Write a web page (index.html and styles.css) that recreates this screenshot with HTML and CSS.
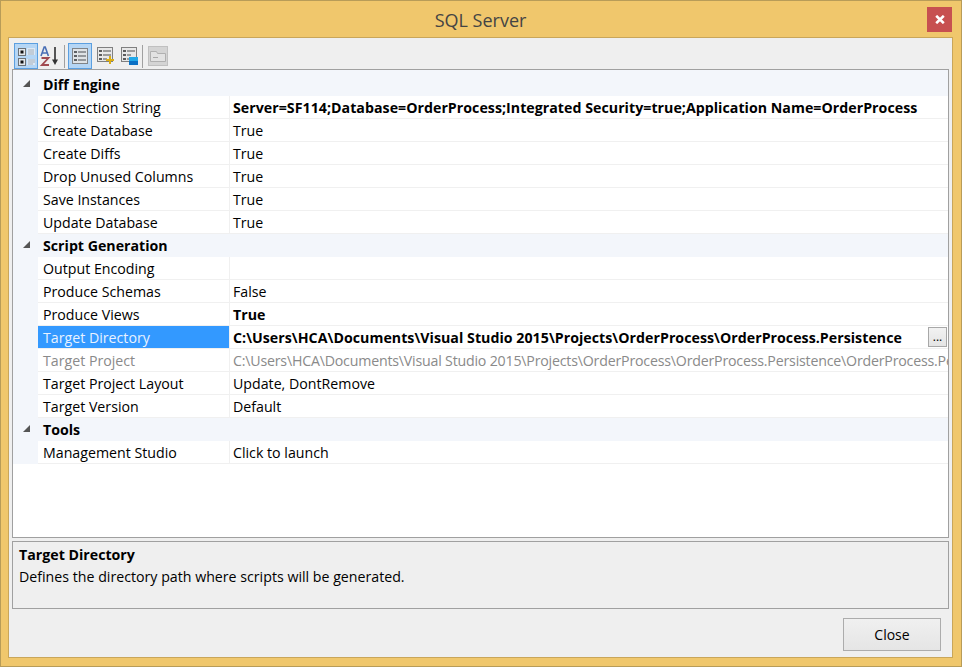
FILE: index.html
```html
<!DOCTYPE html>
<html lang="en">
<head>
  <meta charset="UTF-8" />
  <title>SQL Server</title>
  <link rel="stylesheet" href="styles.css">
</head>
<body>

<div class="window">
  <div class="titlebar">
    <span class="title">SQL Server</span>
    <button class="close-x" aria-label="Close">
      <svg width="10" height="9" viewBox="0 0 10 9"><path d="M1.2 .8 L8.8 8.2 M8.8 .8 L1.2 8.2" stroke="#fff" stroke-width="2.6" fill="none"/></svg>
    </button>
  </div>

  <div class="client">
    <div class="toolbar">
      <button class="tool on">
        <svg width="20" height="20" viewBox="0 0 20 20">
          <rect x="2.5" y="2.5" width="7" height="7" fill="#e4e8ec" stroke="#6c7278"/>
          <rect x="4.5" y="4.5" width="3" height="3" fill="#111"/>
          <rect x="2.5" y="12.5" width="7" height="7" fill="#e4e8ec" stroke="#6c7278"/>
          <rect x="4.5" y="14.5" width="3" height="3" fill="#111"/>
          <path d="M11 2h8v7h-8z M11 13h8v6h-8z" fill="#dbe8f5"/>
          <path d="M12 4h6M12 6h6M12 8h6M12 14h7M12 16h7M12 18h5" stroke="#a7b0ba"/>
        </svg>
      </button>
      <button class="tool">
        <svg width="20" height="20" viewBox="0 0 20 20">
          <path d="M1 10 L4.2 1 L5.2 1 L8.4 10 M2.5 7 H7" fill="none" stroke="#4a6fb5" stroke-width="1.6"/>
          <path d="M1.5 12 H8.5 L2 19 H9" fill="none" stroke="#a04a50" stroke-width="1.8"/>
          <path d="M15 1 V15" stroke="#555" stroke-width="2"/>
          <path d="M12 13.5 H18 L15 19 Z" fill="#333"/>
        </svg>
      </button>
      <span class="tool-sep"></span>
      <button class="tool on">
        <svg width="20" height="20" viewBox="0 0 20 20">
          <rect x="2.5" y="2.5" width="15" height="15" fill="#dfe3e6" stroke="#808488"/>
          <path d="M4 5h3v2H4z M4 9h3v2H4z M4 13h3v2H4z" fill="#5c6064"/>
          <path d="M8 6h8M8 10h8M8 14h8" stroke="#7c8084" stroke-width="1.6"/>
        </svg>
      </button>
      <button class="tool">
        <svg width="20" height="20" viewBox="0 0 20 20">
          <rect x="3.5" y="1.5" width="15" height="14" fill="#e8e8e8" stroke="#808080"/>
          <path d="M5 4h3v2H5z M5 8h3v2H5z M5 12h3v2H5z" fill="#5c5c5c"/>
          <path d="M9 5h8M9 9h8M9 13h4" stroke="#808080" stroke-width="1.6"/>
          <path d="M15 10h2v3h3v2h-3v3h-2v-3h-3v-2h3z" fill="#dcae14"/>
        </svg>
      </button>
      <button class="tool shifted">
        <svg width="20" height="20" viewBox="0 0 20 20">
          <rect x="2.5" y="1.5" width="15" height="14" fill="#e8e8e8" stroke="#808080"/>
          <path d="M4 4h3v2H4z M4 8h3v2H4z M4 12h3v2H4z" fill="#5c5c5c"/>
          <path d="M8 5h8M8 9h4M8 13h3" stroke="#808080" stroke-width="1.6"/>
          <rect x="10" y="11" width="9" height="4" fill="#22a8e8"/>
          <rect x="10" y="15" width="9" height="4" fill="#0c70c4"/>
        </svg>
      </button>
      <span class="tool-sep last"></span>
      <button class="tool">
        <svg width="20" height="20" viewBox="0 0 20 20">
          <rect x="0.5" y="0.5" width="19" height="19" fill="#d4d4d4" stroke="#c0c0c0"/>
          <path d="M2.5 5.5h6l1 2h8v8h-15z" fill="#e2e2e2" stroke="#b0b0b0"/>
          <path d="M5 11.5h5" stroke="#a8a8a8"/>
        </svg>
      </button>
    </div>

    <div class="grid">
      <div class="grp-row first"><span class="arrow"></span>Diff Engine</div>
      <div class="row"><span class="name">Connection String</span><span class="val bold">Server=SF114;Database=OrderProcess;Integrated Security=true;Application Name=OrderProcess</span></div>
      <div class="row"><span class="name">Create Database</span><span class="val">True</span></div>
      <div class="row"><span class="name">Create Diffs</span><span class="val">True</span></div>
      <div class="row"><span class="name">Drop Unused Columns</span><span class="val">True</span></div>
      <div class="row"><span class="name">Save Instances</span><span class="val">True</span></div>
      <div class="row"><span class="name">Update Database</span><span class="val">True</span></div>

      <div class="grp-row"><span class="arrow"></span>Script Generation</div>
      <div class="row"><span class="name">Output Encoding</span><span class="val"></span></div>
      <div class="row"><span class="name">Produce Schemas</span><span class="val">False</span></div>
      <div class="row"><span class="name">Produce Views</span><span class="val bold">True</span></div>
      <div class="row selected"><span class="name">Target Directory</span><span class="val bold">C:\Users\HCA\Documents\Visual Studio 2015\Projects\OrderProcess\OrderProcess.Persistence</span><button class="dots">...</button></div>
      <div class="row readonly"><span class="name">Target Project</span><span class="val path">C:\Users\HCA\Documents\Visual Studio 2015\Projects\OrderProcess\OrderProcess.Persistence\OrderProcess.Persistence.csproj</span></div>
      <div class="row"><span class="name">Target Project Layout</span><span class="val">Update, DontRemove</span></div>
      <div class="row"><span class="name">Target Version</span><span class="val">Default</span></div>

      <div class="grp-row"><span class="arrow"></span>Tools</div>
      <div class="row"><span class="name">Management Studio</span><span class="val">Click to launch</span></div>
    </div>

    <div class="help">
      <div class="help-title">Target Directory</div>
      <div>Defines the directory path where scripts will be generated.</div>
    </div>

    <div class="footer">
      <button class="close-btn">Close</button>
    </div>
  </div>
</div>

</body>
</html>
```

FILE: styles.css
```css
html, body {
  margin: 0;
  padding: 0;
}
body {
  font-family: "Open Sans", sans-serif;
  font-size: 14.2px;
  color: #000;
}
button {
  font-family: inherit;
  padding: 0;
}
.window {
  width: 962px;
  height: 667px;
  box-sizing: border-box;
  background: #f0c76c;
  border: 1px solid #b89c58;
  padding: 0 8px 8px 7px;
  display: flex;
  flex-direction: column;
}
.titlebar {
  height: 36px;
  display: flex;
  justify-content: center;
  align-items: center;
  position: relative;
  flex: none;
}
.title {
  font-size: 18px;
  color: #444;
  padding-top: 2px;
}
.close-x {
  position: absolute;
  top: 6px;
  right: 1px;
  width: 25px;
  height: 25px;
  border: 0;
  background: #c75050;
  display: flex;
  align-items: center;
  justify-content: center;
}
.client {
  flex: 1;
  background: #efefef;
  border: 1px solid #c9a65a;
  padding: 0 3px;
  display: flex;
  flex-direction: column;
  min-height: 0;
}
.toolbar {
  height: 31px;
  flex: none;
  display: flex;
  align-items: flex-end;
  padding-left: 2px;
}
.tool {
  width: 24px;
  height: 26px;
  box-sizing: border-box;
  border: 0;
  background: none;
  display: flex;
  align-items: center;
  justify-content: center;
  flex: none;
}
.tool.on {
  background: #b5d6f5;
  border: 1px solid #5b9fe0;
}
.tool.shifted {
  margin-left: 1px;
}
.tool-sep {
  width: 1px;
  height: 23px;
  background: #a0a0a0;
  margin: 0 3px 1px 2px;
}
.tool-sep.last {
  margin-left: 1px;
}
.grid {
  height: 469px;
  flex: none;
  box-sizing: border-box;
  background: #fff;
  border: 1px solid #a0a0a0;
  overflow: hidden;
}
.grp-row {
  height: 23px;
  background: #f3f6fb;
  font-weight: 700;
  line-height: 23px;
  padding-left: 30px;
  position: relative;
  white-space: nowrap;
}
.grp-row.first {
  padding-top: 3px;
}
.arrow {
  position: absolute;
  left: 10px;
  bottom: 9px;
  width: 0;
  height: 0;
  border-left: 7px solid transparent;
  border-bottom: 7px solid #555;
}
.row {
  height: 23px;
  display: flex;
  padding-left: 25px;
  background: #f3f6fb;
  white-space: nowrap;
  position: relative;
  overflow: hidden;
}
.name, .val {
  box-sizing: border-box;
  background: #fff;
  border-bottom: 1px solid #f0f0f0;
  padding-top: 1px;
  line-height: 21px;
}
.name {
  width: 192px;
  flex: none;
  padding-left: 5px;
  border-right: 1px solid #f0f0f0;
}
.val {
  flex: 1;
  min-width: 0;
  padding-left: 3px;
  overflow: hidden;
}
.bold {
  font-weight: 700;
  letter-spacing: 0.03px;
}
.path {
  letter-spacing: -0.2px;
}
.selected .name {
  background: #3399ff;
  color: #e8f2ff;
}
.readonly .name, .readonly .val {
  color: #8a8a8a;
}
.dots {
  position: absolute;
  right: 1px;
  top: 1px;
  width: 19px;
  height: 20px;
  box-sizing: border-box;
  border: 1px solid #a8a8a8;
  background: linear-gradient(#f2f2f2, #e4e4e4);
  font-size: 12px;
  line-height: 16px;
}
.help {
  height: 68px;
  flex: none;
  box-sizing: border-box;
  margin-top: 3px;
  border: 1px solid #a0a0a0;
  padding: 2px 6px;
  line-height: 22px;
}
.help-title {
  font-weight: 700;
}
.footer {
  flex: 1;
  display: flex;
  justify-content: flex-end;
  padding: 9px 8px 0 0;
}
.close-btn {
  width: 98px;
  height: 33px;
  box-sizing: border-box;
  border: 1px solid #acacac;
  background: linear-gradient(#f0f0f0, #e5e5e5);
  font-size: 14px;
  color: #000;
}
```
